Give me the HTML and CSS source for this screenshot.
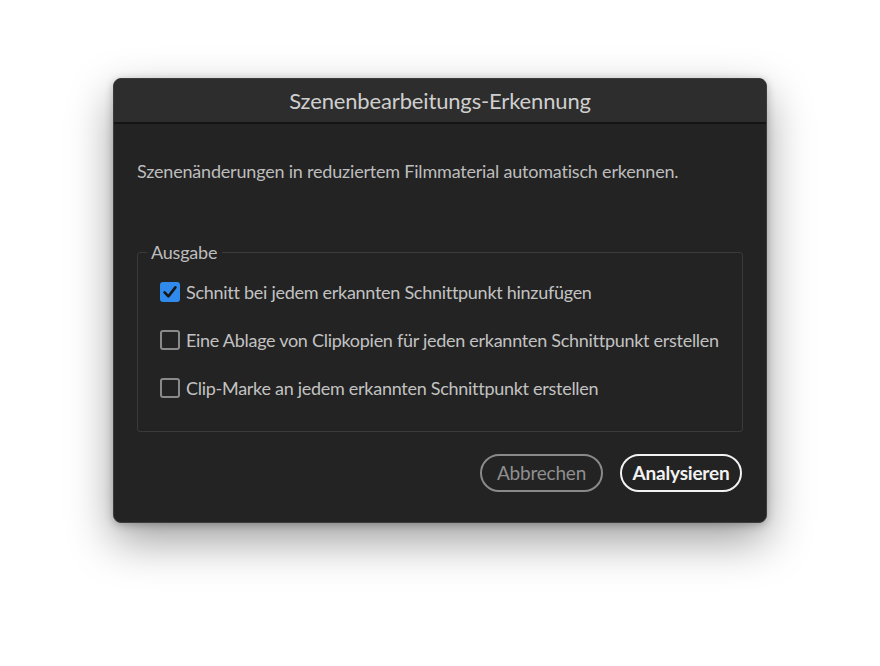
FILE: index.html
```html
<!DOCTYPE html>
<html>

<head>
    <meta charset="UTF-8">
    <title>Szenenbearbeitungs-Erkennung</title>
    <link rel="stylesheet" href="styles.css">
</head>

<body>
    <div class="dialog">
        <div class="titleBar">Szenenbearbeitungs-Erkennung</div>
        <div class="dialogBody">
            <p class="desc">Szenenänderungen in reduziertem Filmmaterial automatisch erkennen.</p>

            <fieldset class="group">
                <legend>Ausgabe</legend>
                <label class="row">
                    <span class="check on">
                        <svg width="20" height="20" viewBox="0 0 20 20"><path d="M4.6 10.4 L8.4 14.4 L15.4 5.4" fill="none" stroke="#161616" stroke-width="2.6" stroke-linecap="round" stroke-linejoin="round"/></svg>
                    </span>
                    Schnitt bei jedem erkannten Schnittpunkt hinzufügen
                </label>
                <label class="row">
                    <span class="check"></span>
                    Eine Ablage von Clipkopien für jeden erkannten Schnittpunkt erstellen
                </label>
                <label class="row">
                    <span class="check"></span>
                    Clip-Marke an jedem erkannten Schnittpunkt erstellen
                </label>
            </fieldset>

            <div class="buttons">
                <a href="javascript:;" class="btn">Abbrechen</a>
                <a href="javascript:;" class="btn primary">Analysieren</a>
            </div>
        </div>
    </div>
</body>

</html>
```

FILE: styles.css
```css
* {
    margin: 0;
    padding: 0;
    box-sizing: border-box;
    text-decoration: none;
}

body {
    width: 880px;
    height: 666px;
    background-color: #fff;
    padding: 78px 0 0 113px;
    font-family: Lato, "Liberation Sans", sans-serif;
    color: #bdbdbd;
    overflow: hidden;
}

.dialog {
    width: 654px;
    height: 445px;
    background-color: #232323;
    border: solid 1px #3c3c3c;
    border-radius: 8px;
    box-shadow: 0 18px 45px rgba(0, 0, 0, 0.38), 0 2px 8px rgba(0, 0, 0, 0.25);
    overflow: hidden;
    display: flex;
    flex-direction: column;
}

.titleBar {
    height: 45px;
    line-height: 44px;
    text-align: center;
    font-size: 22px;
    letter-spacing: -0.15px;
    color: #cfcfcf;
    background-color: #2d2d2d;
    border-bottom: solid 2px #141414;
}

.dialogBody {
    flex: 1;
    padding: 35px 23px 0 23px;
    display: flex;
    flex-direction: column;
}

.desc {
    font-size: 18px;
    letter-spacing: -0.2px;
    line-height: 24px;
    color: #bdbdbd;
    white-space: nowrap;
}

.group {
    min-width: 0;
    margin-top: 58px;
    border: solid 1px #3a3a3a;
    border-radius: 3px;
    padding: 5px 20px 19px 22px;
}

.group legend {
    margin-left: -13px;
    padding: 0 5px 0 4px;
    font-size: 18px;
    letter-spacing: -0.2px;
    line-height: 22px;
    color: #bdbdbd;
}

.row {
    display: flex;
    align-items: center;
    gap: 6px;
    height: 48px;
    font-size: 18px;
    letter-spacing: -0.28px;
    color: #c2c2c2;
    white-space: nowrap;
}

.check {
    width: 20px;
    height: 20px;
    border: solid 2px #8a8a8a;
    border-radius: 3px;
    flex-shrink: 0;
}

.check.on {
    border: none;
    background-color: #2f8aeb;
}

.check svg {
    display: block;
}

.buttons {
    margin-top: 22px;
    margin-right: 1px;
    display: flex;
    justify-content: flex-end;
    gap: 17px;
}

.btn {
    display: block;
    width: 123px;
    height: 38px;
    line-height: 34px;
    text-align: center;
    font-size: 19px;
    letter-spacing: -0.2px;
    color: #8f8f8f;
    border: solid 2px #8a8a8a;
    border-radius: 19px;
}

.btn.primary {
    width: 122px;
    color: #f2f2f2;
    border-color: #f2f2f2;
    font-weight: bold;
}
```
